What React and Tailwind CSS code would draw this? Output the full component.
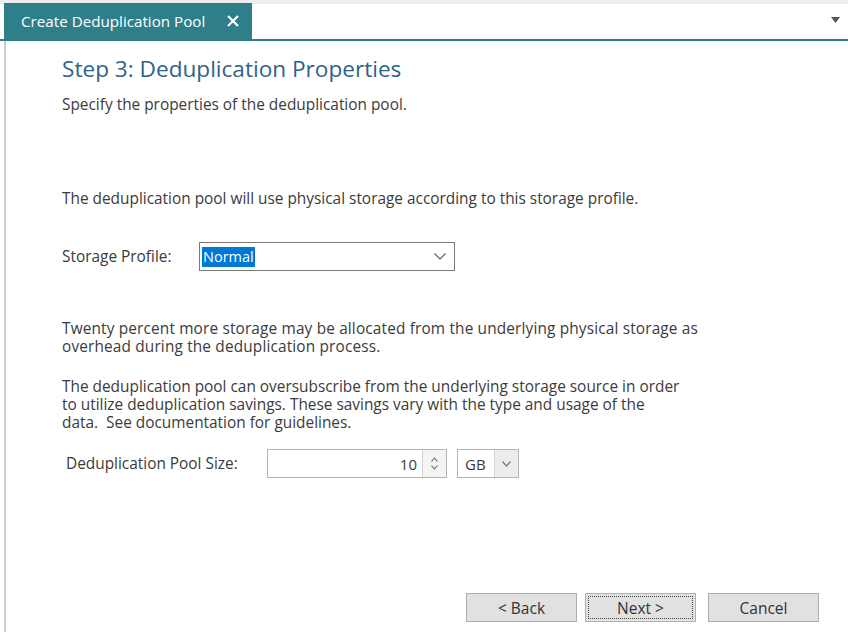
import React from 'react';

const font = { fontFamily: '"Open Sans", "Noto Sans", sans-serif' };

const Chevron = ({ className = '' }) => (
  <svg width="12" height="7" viewBox="0 0 12 7" className={className}>
    <path d="M0.5 0.5 L6 6 L11.5 0.5" fill="none" stroke="#555" strokeWidth="1.1" />
  </svg>
);

const WizardButton = ({ label, focused }) => (
  <button
    className={`w-[111px] h-[29px] bg-[#e1e1e1] text-[15.5px] leading-[20px] text-[#333] border ${
      focused ? 'border-[#7ec0e0] p-[2px]' : 'border-[#adadad]'
    }`}
  >
    {focused ? (
      <span className="flex h-full w-full items-center justify-center border border-dotted border-[#444]">
        {label}
      </span>
    ) : (
      label
    )}
  </button>
);

export default function App() {
  return (
    <div style={font} className="w-[848px] h-[632px] bg-white overflow-hidden flex flex-col text-[#3b3b3b]">
      {/* tab strip */}
      <div className="h-[4px] bg-[#ededed] shrink-0" />
      <div className="relative flex h-[37px] shrink-0 items-end border-b-2 border-[#2f7f8b] pl-[4px]">
        <div className="flex h-[36px] w-[248px] items-center gap-[22px] bg-[#2f7f8b] pl-[17px] text-[15.2px] text-white">
          <span>Create Deduplication Pool</span>
          <svg width="12" height="12" viewBox="0 0 12 12">
            <path d="M1 1 L11 11 M11 1 L1 11" stroke="white" strokeWidth="2.2" />
          </svg>
        </div>
        <svg width="9" height="6" viewBox="0 0 9 6" className="absolute right-[8px] top-[13px]">
          <path d="M0 0 H9 L4.5 6 Z" fill="#555" />
        </svg>
      </div>

      {/* wizard page */}
      <div className="ml-[4px] flex flex-1 flex-col border-l-2 border-[#cdcdcd] pl-[56px] text-[15.4px] leading-[18px]">
        <h1 className="mt-[14px] text-[22.6px] leading-[28px] text-[#2f6389]">Step 3: Deduplication Properties</h1>
        <p className="mt-[13px]">Specify the properties of the deduplication pool.</p>

        <p className="mt-[76px]">The deduplication pool will use physical storage according to this storage profile.</p>

        <div className="mt-[34px] flex items-center">
          <span className="w-[137px]">Storage Profile:</span>
          <div className="flex h-[29px] w-[256px] items-center justify-between border border-[#7a7a7a] pl-[2px] pr-[8px]">
            <span className="bg-[#0078d7] px-[1px] text-[14.5px] leading-[20px] text-white">Normal</span>
            <Chevron />
          </div>
        </div>

        <p className="mt-[49px] w-[700px] tracking-[0.15px]">
          Twenty percent more storage may be allocated from the underlying physical storage as
          <br />
          overhead during the deduplication process.
        </p>

        <p className="mt-[22px] w-[700px]">
          The deduplication pool can oversubscribe from the underlying storage source in order
          <br />
          to utilize deduplication savings. These savings vary with the type and usage of the
          <br />
          data.&nbsp; See documentation for guidelines.
        </p>

        <div className="mt-[17px] flex items-center pl-[4px]">
          <span className="w-[201px] whitespace-nowrap">Deduplication Pool Size:</span>
          <div className="flex h-[29px] w-[180px] border border-[#b4b4b4]">
            <div className="flex flex-1 items-center justify-end pr-[5px] text-[15px]">10</div>
            <div className="flex w-[24px] flex-col items-center justify-center gap-[3px] border-l border-[#d4d4d4] bg-[#f4f4f4]">
              <svg width="7" height="5" viewBox="0 0 7 5">
                <path d="M0.5 4.5 L3.5 1 L6.5 4.5" fill="none" stroke="#666" strokeWidth="1.1" />
              </svg>
              <svg width="7" height="5" viewBox="0 0 7 5">
                <path d="M0.5 0.5 L3.5 4 L6.5 0.5" fill="none" stroke="#666" strokeWidth="1.1" />
              </svg>
            </div>
          </div>
          <div className="ml-[10px] flex h-[29px] w-[62px] border border-[#b4b4b4]">
            <div className="flex flex-1 items-center pl-[7px] text-[15px]">GB</div>
            <div className="flex w-[24px] items-center justify-center border-l border-[#d4d4d4] bg-[#ececec]">
              <svg width="9" height="6" viewBox="0 0 9 6">
                <path d="M0.5 0.5 L4.5 5 L8.5 0.5" fill="none" stroke="#777" strokeWidth="1.2" />
              </svg>
            </div>
          </div>
        </div>

        <div className="mt-auto mb-[10px] flex justify-end pr-[29px]">
          <WizardButton label="< Back" />
          <div className="ml-[8px]">
            <WizardButton label="Next >" focused />
          </div>
          <div className="ml-[12px]">
            <WizardButton label="Cancel" />
          </div>
        </div>
      </div>
    </div>
  );
}
